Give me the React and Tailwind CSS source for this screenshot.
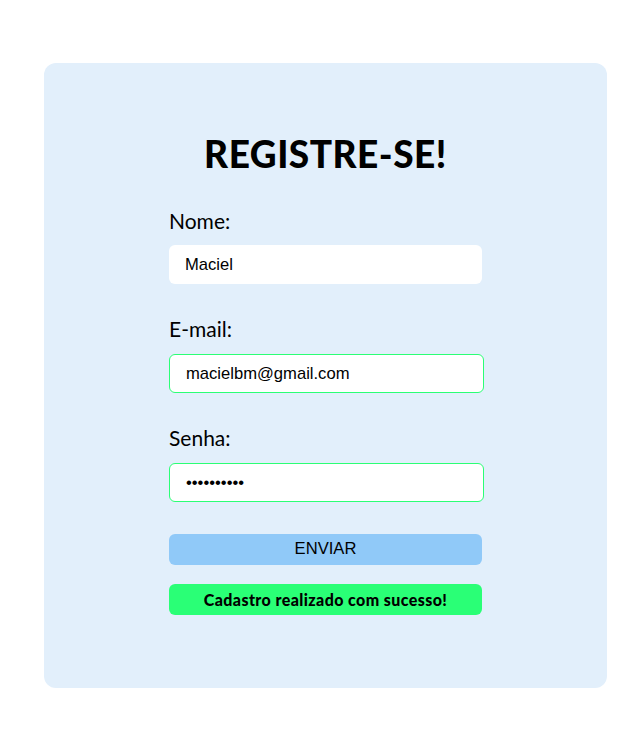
import React, { useState } from 'react';

const App = () => {
  const [nome, setNome] = useState('Maciel');
  const [email, setEmail] = useState('macielbm@gmail.com');
  const [senha, setSenha] = useState('1234567890');

  return (
    <div className="min-h-screen bg-white pt-[63px] font-['Lato',sans-serif]">
      <div className="ml-[44px] w-[563px] h-[625px] rounded-xl bg-[#e2effb] pt-[71px]">
        <form className="ml-[125px] flex w-[315px] flex-col" onSubmit={(e) => e.preventDefault()}>
          <h1 className="w-[313px] text-center text-[37px] leading-[40px] font-black tracking-[0.5px] text-black">
            REGISTRE-SE!
          </h1>

          {/* Nome */}
          <label className="mt-[33px] text-[21px] leading-[28px] text-black">Nome:</label>
          <input
            type="text"
            value={nome}
            onChange={(e) => setNome(e.target.value)}
            className="mt-[10px] h-[39px] w-[313px] rounded-md bg-white px-4 font-['Liberation_Sans',sans-serif] text-[16.6px] text-black outline-none"
          />

          {/* E-mail */}
          <label className="mt-[31px] text-[21px] leading-[28px] text-black">E-mail:</label>
          <input
            type="email"
            value={email}
            onChange={(e) => setEmail(e.target.value)}
            className="mt-[11px] h-[39px] w-[315px] rounded-md border border-[#2bff75] bg-white px-4 font-['Liberation_Sans',sans-serif] text-[16.6px] text-black outline-none"
          />

          {/* Senha */}
          <label className="mt-[31px] text-[21px] leading-[28px] text-black">Senha:</label>
          <input
            type="password"
            value={senha}
            onChange={(e) => setSenha(e.target.value)}
            className="mt-[11px] h-[39px] w-[315px] rounded-md border border-[#2bff75] bg-white px-4 font-['Liberation_Sans',sans-serif] text-[16.6px] text-black outline-none"
          />

          <button
            type="submit"
            className="mt-[32px] h-[31px] w-[313px] rounded-md bg-[#90c9f8] font-['Liberation_Sans',sans-serif] text-[16.6px] text-black"
          >
            ENVIAR
          </button>

          <div className="mt-[19px] flex h-[31px] w-[313px] items-center justify-center rounded-md bg-[#2aff76] text-[16px] tracking-[0.4px] font-black text-black">
            Cadastro realizado com sucesso!
          </div>
        </form>
      </div>
    </div>
  );
};

export default App;
